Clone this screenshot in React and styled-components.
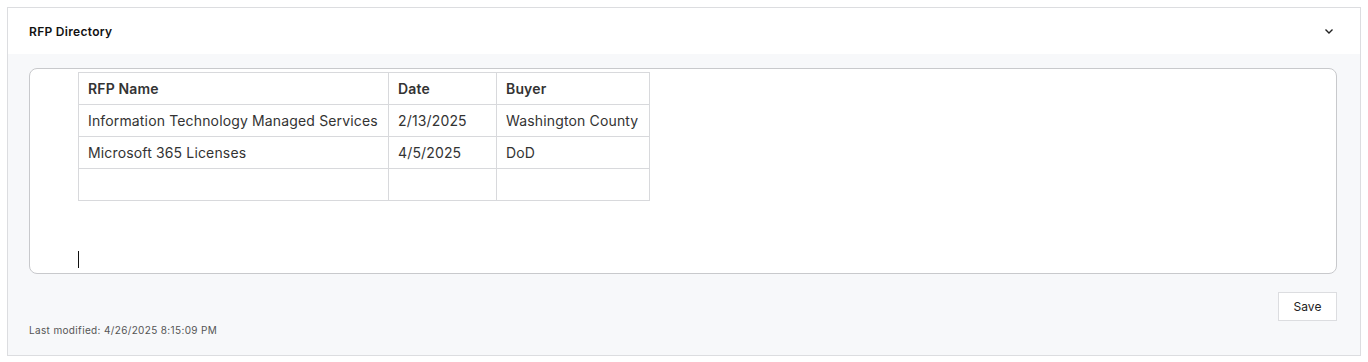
import React from 'react';
import styled, {createGlobalStyle} from 'styled-components';

const GlobalStyle = createGlobalStyle`
  html, body {
    margin: 0;
    padding: 0;
    background: #ffffff;
    font-family: Inter, "Noto Sans", sans-serif;
    color: #222;
  }
`;

const Page = styled.div`
  padding: 7px 7px 6px 7px;
`;

const Panel = styled.section`
  border: 1px solid #dcdde0;
  background: #f7f8fa;
`;

const PanelHeader = styled.div`
  height: 46px;
  display: flex;
  align-items: center;
  justify-content: space-between;
  padding: 0 26px 0 21px;
  background: #ffffff;
`;

const PanelTitle = styled.h2`
  margin: 0;
  font-size: 12px;
  font-weight: 600;
  letter-spacing: 0.3px;
  color: #111;
`;

const Chevron = styled.svg`
  width: 10px;
  height: 10px;
  display: block;
`;

const PanelBody = styled.div`
  padding: 14px 23px 19px 21px;
`;

const Editor = styled.div`
  height: 201px;
  background: #ffffff;
  border: 1px solid #c8c9cc;
  border-radius: 8px;
  padding: 3px 48px 0 48px;
  display: flex;
  flex-direction: column;
  align-items: flex-start;
`;

const Table = styled.table`
  border-collapse: collapse;
  font-size: 14px;
  letter-spacing: 0.15px;
  color: #333;
`;

const Cell = styled.td`
  border: 1px solid #d8d9dc;
  height: 32px;
  padding: 0 9px;
  white-space: nowrap;
  font-weight: ${props => (props.$head ? 600 : 400)};
  width: ${props => props.$w}px;
  box-sizing: border-box;
`;

const Caret = styled.span`
  display: block;
  width: 1px;
  height: 17px;
  background: #111;
  margin-top: auto;
  margin-bottom: 5px;
`;

const Footer = styled.div`
  display: flex;
  flex-direction: column;
  align-items: stretch;
  padding-top: 18px;
`;

const SaveRow = styled.div`
  display: flex;
  justify-content: flex-end;
`;

const SaveButton = styled.button`
  width: 59px;
  height: 29px;
  background: #ffffff;
  border: 1px solid #dcdde0;
  font-family: Inter, "Noto Sans", sans-serif;
  font-size: 12px;
  color: #222;
  cursor: pointer;
`;

const Modified = styled.div`
  font-size: 10px;
  letter-spacing: 0.35px;
  color: #555;
  margin-top: 3px;
`;

const rows = [
  ['Information Technology Managed Services', '2/13/2025', 'Washington County'],
  ['Microsoft 365 Licenses', '4/5/2025', 'DoD'],
  ['', '', '']
];

const widths = [310, 108, 153];

export default function App() {
  return (
    <Page>
      <GlobalStyle />
      <Panel>
        <PanelHeader>
          <PanelTitle>RFP Directory</PanelTitle>
          <Chevron viewBox="0 0 10 10" fill="none">
            <path d="M1.5 3.5 L5 7 L8.5 3.5" stroke="#222" strokeWidth="1.4" />
          </Chevron>
        </PanelHeader>
        <PanelBody>
          <Editor>
            <Table>
              <tbody>
                <tr>
                  <Cell $head $w={widths[0]}>RFP Name</Cell>
                  <Cell $head $w={widths[1]}>Date</Cell>
                  <Cell $head $w={widths[2]}>Buyer</Cell>
                </tr>
                {rows.map((r, i) => (
                  <tr key={i}>
                    {r.map((c, j) => (
                      <Cell key={j} $w={widths[j]}>{c}</Cell>
                    ))}
                  </tr>
                ))}
              </tbody>
            </Table>
            <Caret />
          </Editor>
          <Footer>
            <SaveRow>
              <SaveButton>Save</SaveButton>
            </SaveRow>
            <Modified>Last modified: 4/26/2025 8:15:09 PM</Modified>
          </Footer>
        </PanelBody>
      </Panel>
    </Page>
  );
}
